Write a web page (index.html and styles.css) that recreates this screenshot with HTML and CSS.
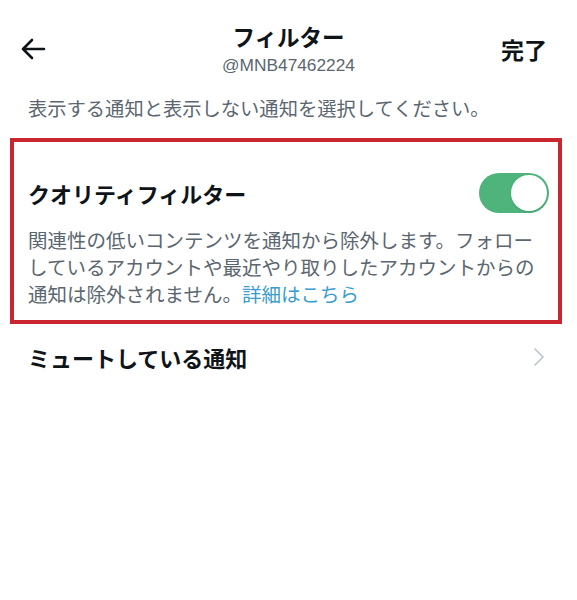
FILE: index.html
```html
<!DOCTYPE html>
<html lang="ja">
<head>
    <meta charset="UTF-8">
    <meta name="viewport" content="width=device-width, initial-scale=1.0">
    <title>フィルター</title>
    <link rel="stylesheet" href="styles.css">
</head>
<body>

<div class="screen">
    <div class="header">
        <button class="back-button" aria-label="戻る">
            <svg width="26" height="22" viewBox="0 0 26 22">
                <path d="M24 11H3M12 2L3 11l9 9" fill="none" stroke="#0f1419" stroke-width="2.6" stroke-linecap="round" stroke-linejoin="round"/>
            </svg>
        </button>
        <div class="title-block">
            <div class="title">フィルター</div>
            <div class="handle">@MNB47462224</div>
        </div>
        <button class="done-button">完了</button>
    </div>

    <p class="intro">表示する通知と表示しない通知を選択してください。</p>

    <div class="highlight">
        <div class="setting-row">
            <span class="setting-title">クオリティフィルター</span>
            <span class="toggle on"><span class="knob"></span></span>
        </div>
        <p class="setting-desc">
            関連性の低いコンテンツを通知から除外します。フォロー<br>
            しているアカウントや最近やり取りしたアカウントからの<br>
            通知は除外されません。<a href="#" class="more-link">詳細はこちら</a>
        </p>
    </div>

    <div class="nav-row">
        <span class="nav-title">ミュートしている通知</span>
        <svg class="chevron" width="12" height="20" viewBox="0 0 12 20">
            <path d="M2 2l8 8-8 8" fill="none" stroke="#b9c3cc" stroke-width="1.6" stroke-linecap="round" stroke-linejoin="round"/>
        </svg>
    </div>
</div>

</body>
</html>
```

FILE: styles.css
```css
:root {
    --text-main: #0f1419;
    --text-sub: #5b6670;
    --accent-red: #c9262f;
    --toggle-green: #4fb47c;
    --link-blue: #3b9ccf;
}

html, body {
    margin: 0;
    padding: 0;
    background-color: #ffffff;
}

body {
    font-family: "Noto Sans CJK JP", "Noto Sans", "Liberation Sans", sans-serif;
    color: var(--text-main);
}

.screen {
    width: 577px;
}

.header {
    display: grid;
    grid-template-columns: 1fr auto 1fr;
    align-items: center;
    padding: 22px 20px 0 20px;
}

.back-button,
.done-button {
    background: transparent;
    border: none;
    padding: 0;
    cursor: pointer;
    font-family: inherit;
    color: var(--text-main);
}

.back-button {
    justify-self: start;
    display: flex;
}

.done-button {
    justify-self: end;
    font-size: 23px;
    font-weight: 700;
    line-height: 28px;
    margin-right: 10px;
}

.title-block {
    text-align: center;
}

.title {
    font-size: 22.5px;
    font-weight: 700;
    line-height: 28px;
}

.handle {
    font-family: "Liberation Sans", "Noto Sans", sans-serif;
    font-size: 17.3px;
    line-height: 20px;
    margin-top: 5px;
    color: var(--text-sub);
}

.intro {
    margin: 19px 0 16px 28px;
    font-size: 19.3px;
    line-height: 28px;
    color: var(--text-sub);
}

.highlight {
    margin: 0 15px 0 10px;
    border: 4px solid var(--accent-red);
    padding: 31px 9px 13px 14px;
}

.setting-row {
    display: flex;
    align-items: center;
    justify-content: space-between;
    height: 40px;
}

.setting-title {
    font-size: 22px;
    font-weight: 700;
    line-height: 30px;
}

.toggle {
    position: relative;
    width: 70px;
    height: 40px;
    border-radius: 20px;
    background-color: var(--toggle-green);
}

.toggle .knob {
    position: absolute;
    top: 2px;
    right: 2px;
    width: 36px;
    height: 36px;
    border-radius: 50%;
    background-color: #ffffff;
    box-shadow: 0 1px 2px rgba(0, 0, 0, 0.15);
}

.setting-desc {
    margin: 13px 0 0 0;
    font-size: 19.5px;
    line-height: 27px;
    color: var(--text-sub);
    white-space: nowrap;
}

.more-link {
    color: var(--link-blue);
    text-decoration: none;
}

.nav-row {
    display: flex;
    align-items: center;
    justify-content: space-between;
    padding: 18px 32px 0 28px;
}

.nav-title {
    font-size: 22px;
    font-weight: 700;
    line-height: 30px;
}

.chevron {
    display: block;
}
```
